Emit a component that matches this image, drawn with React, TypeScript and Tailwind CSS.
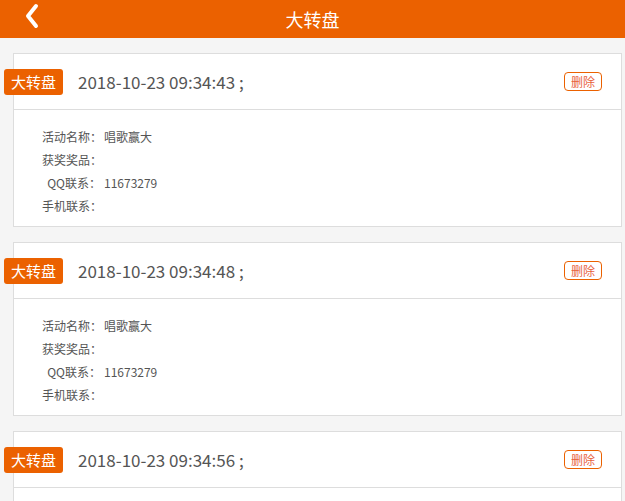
import React from "react";

const records = [
  { time: "2018-10-23 09:34:43 ;" },
  { time: "2018-10-23 09:34:48 ;" },
  { time: "2018-10-23 09:34:56 ;" },
];

const font = { fontFamily: '"Microsoft YaHei", "Noto Sans CJK SC", "Noto Sans", sans-serif' };

function Row({ label, value, indent }: { label: string; value?: string; indent?: boolean }) {
  return (
    <div className="flex h-[23px] items-center text-[12px] leading-[23px] text-[#555]">
      <span className={`w-[60px] ${indent ? "text-right pr-[1px]" : "text-left"} whitespace-nowrap`}>{label}</span>
      <span className="ml-[2px]">{value}</span>
    </div>
  );
}

function Card({ time }: { time: string }) {
  return (
    <div className="ml-[13px] mb-[15px] w-[609px] border border-[#dddddd] bg-white">
      <div className="flex h-[56px] items-center border-b border-[#dddddd]">
        <div className="-ml-[10px] flex h-[26px] w-[59px] items-center justify-center rounded-[3px] bg-[#eb6100] text-[15px] leading-none text-white">
          大转盘
        </div>
        <div className="ml-[15px] text-[17px] leading-none text-[#555]">{time}</div>
        <div className="ml-auto mr-[19px] flex h-[19px] w-[38px] items-center justify-center rounded-[4px] border border-[#eb6100] text-[12px] leading-none text-[#e8613c]">
          删除
        </div>
      </div>
      <div className="pl-[28px] pt-[15px] pb-[9px]">
        <Row label="活动名称：" value="唱歌赢大" />
        <Row label="获奖奖品：" />
        <Row label="QQ联系：" value="11673279" indent />
        <Row label="手机联系：" />
      </div>
    </div>
  );
}

export default function App() {
  return (
    <div className="h-[501px] w-[625px] overflow-hidden bg-[#f5f5f5]" style={font}>
      <div className="relative flex h-[38px] items-center justify-center bg-[#eb6100]">
        <svg className="absolute left-[24px] top-[3px]" width="16" height="26" viewBox="0 0 16 26">
          <path d="M12 3 L4 13 L12 23" stroke="#ffffff" strokeWidth="4" fill="none" strokeLinecap="round" strokeLinejoin="round" />
        </svg>
        <span className="text-[18px] leading-none text-white">大转盘</span>
      </div>
      <div className="pt-[15px]">
        {records.map((r, i) => (
          <Card key={i} time={r.time} />
        ))}
      </div>
    </div>
  );
}
